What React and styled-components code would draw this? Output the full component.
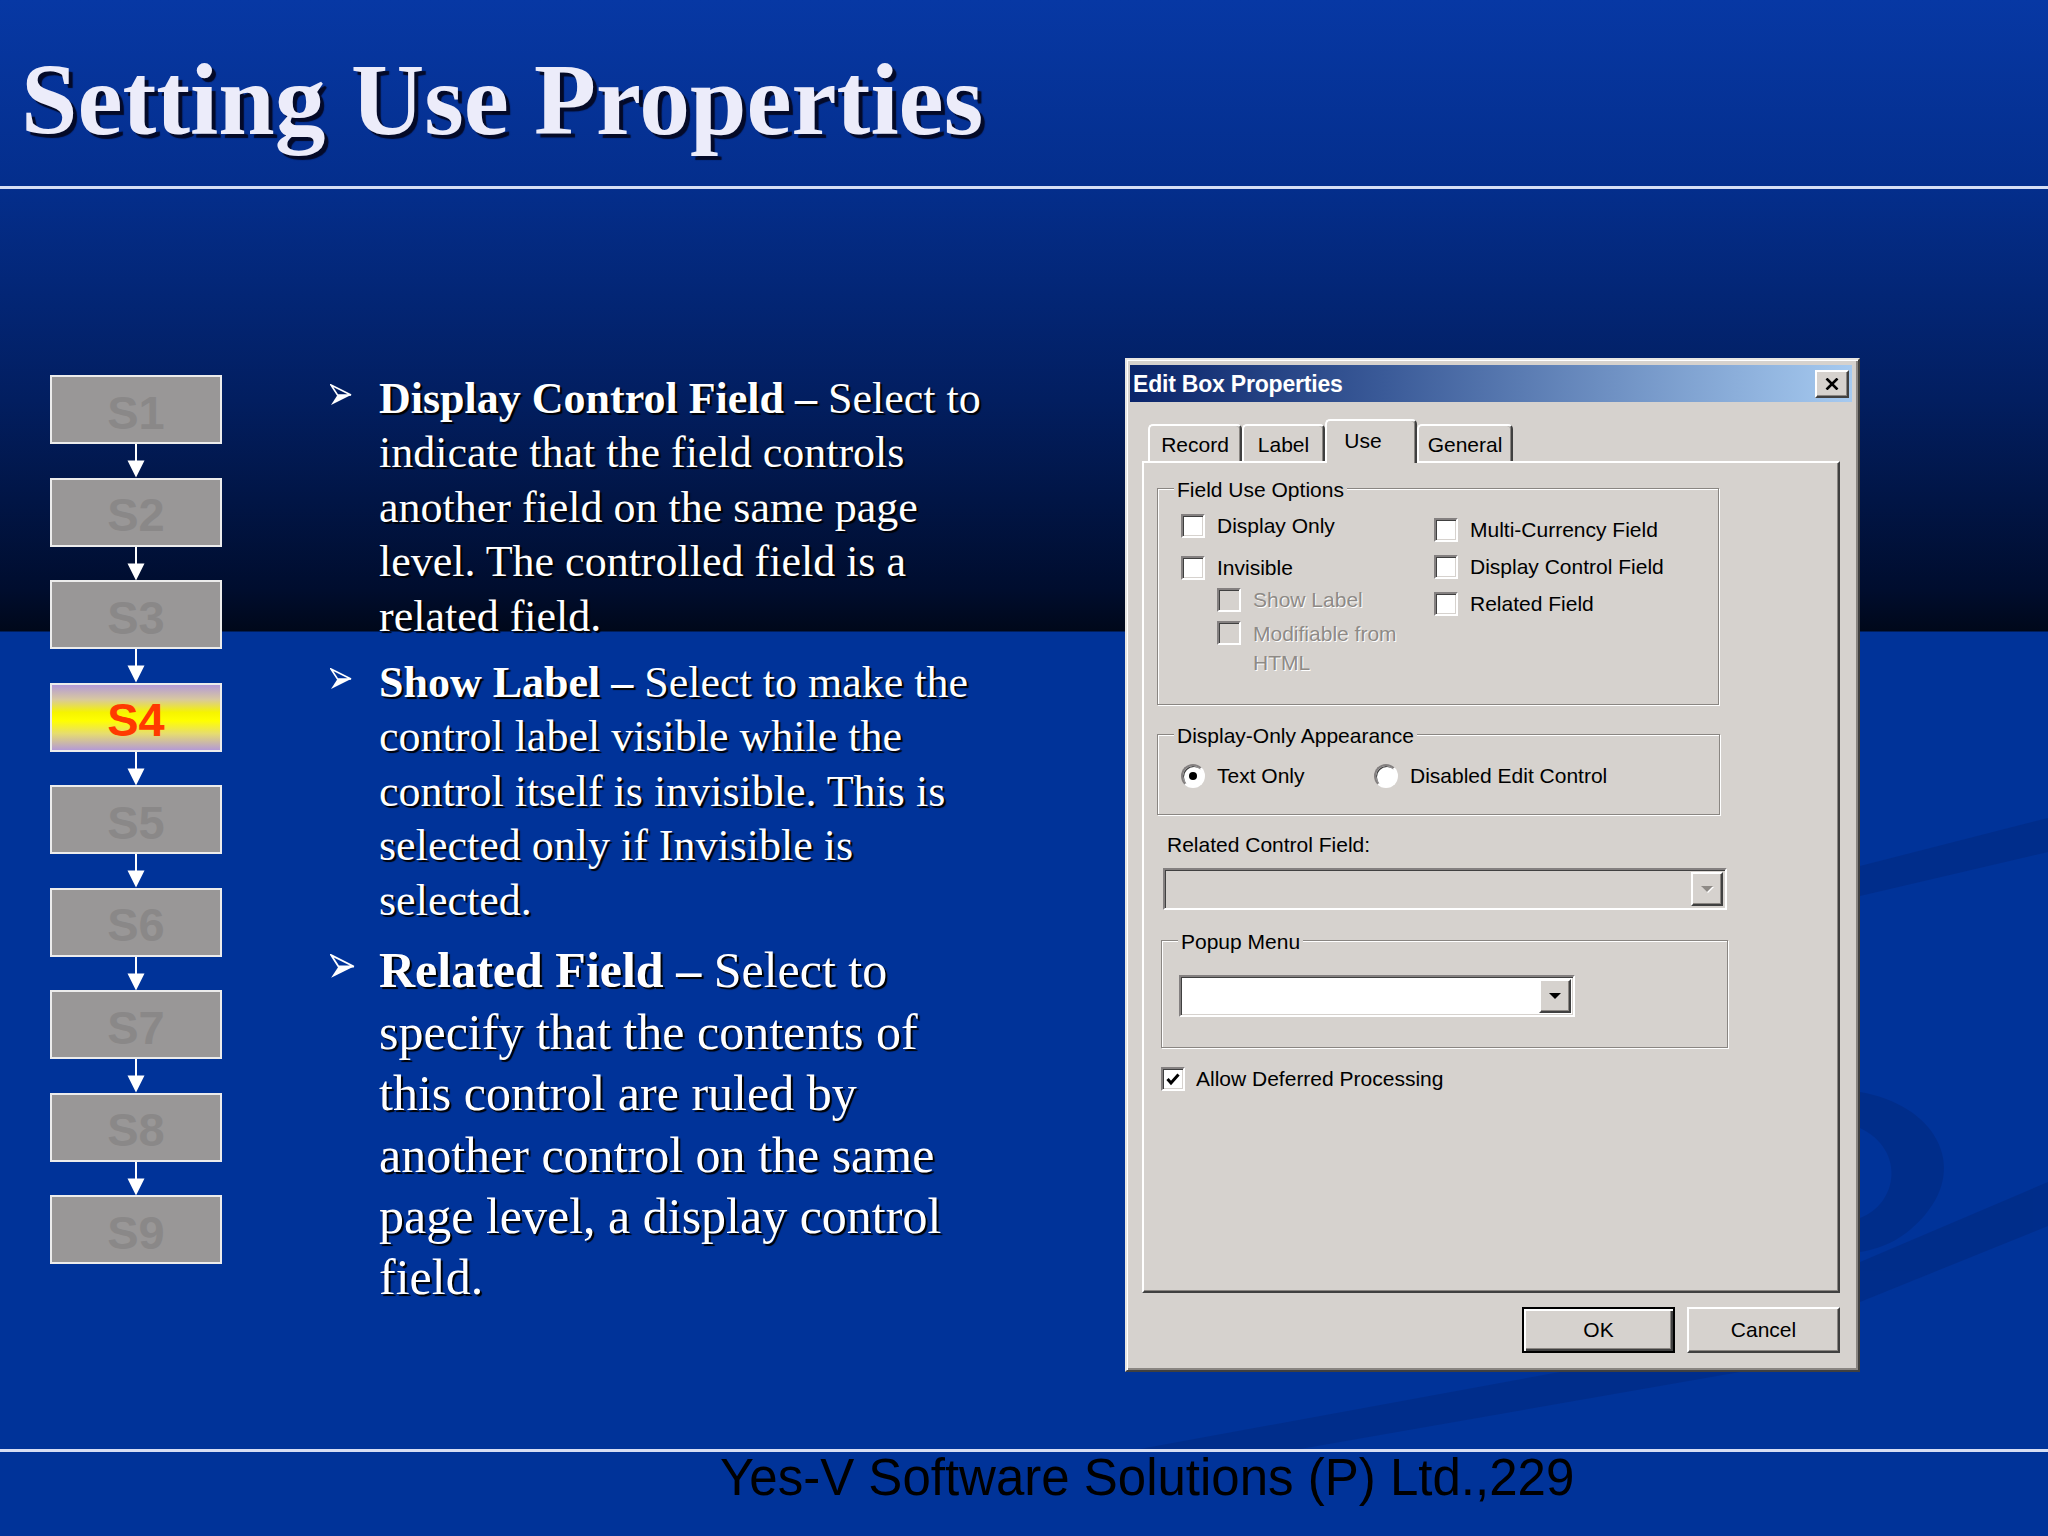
import React from "react";
import styled, { createGlobalStyle } from "styled-components";

const GlobalStyle = createGlobalStyle`
  html, body { margin: 0; padding: 0; background: #003399; }
  #root { width: 2048px; height: 1536px; }
`;

const Slide = styled.div`
  position: relative;
  width: 2048px;
  height: 1536px;
  overflow: hidden;
  display: flex;
  flex-direction: column;
  background: linear-gradient(
    to bottom,
    #0738a4 0px,
    #042e8c 187px,
    #021e60 400px,
    #000d2e 590px,
    #00081a 631px,
    #003399 632px,
    #003399 100%
  );
`;

const Backdrop = styled.svg`
  position: absolute;
  left: 0;
  top: 0;
  width: 2048px;
  height: 1536px;
  pointer-events: none;
`;

const Header = styled.header`
  position: relative;
  box-sizing: border-box;
  height: 186px;
  padding: 50px 0 0 21px;
`;

const Title = styled.h1`
  margin: 0;
  font-family: "Liberation Serif", "Times New Roman", serif;
  font-weight: 700;
  font-size: 101.5px;
  line-height: 101px;
  color: #ececfa;
  text-shadow: 4px 4px 1px #040a28;
  white-space: nowrap;
`;

const Rule = styled.div`
  position: relative;
  height: 3px;
  background: #d6def4;
`;

const Main = styled.main`
  position: relative;
  height: 1260px;
  display: flex;
  align-items: flex-start;
`;

/* ---------- stepper ---------- */
const Stepper = styled.ol`
  list-style: none;
  margin: 186px 0 0 50px;
  padding: 0;
  width: 172px;
  display: flex;
  flex-direction: column;
  align-items: stretch;
`;

const StepBox = styled.li`
  box-sizing: border-box;
  height: 69px;
  border: 2px solid #ececec;
  background: ${(p) =>
    p.$active
      ? "linear-gradient(to bottom, #b49ad6 0%, #d8c8a0 22%, #f6f400 42%, #ffff00 55%, #e6dc70 75%, #b49ad6 100%)"
      : "#999797"};
  display: flex;
  align-items: center;
  justify-content: center;
  padding-top: 5px;
  font-family: "Liberation Sans", Arial, sans-serif;
  font-weight: 700;
  font-size: 47px;
  line-height: 1;
  color: ${(p) => (p.$active ? "#ff3a00" : "#8a8888")};
`;

const Connector = styled.svg`
  display: block;
  align-self: center;
  width: 18px;
  height: 33.5px;
`;

/* ---------- bullets ---------- */
const Bullets = styled.ul`
  list-style: none;
  margin: 183px 0 0 108px;
  padding: 0;
  width: 760px;
`;

const Item = styled.li`
  display: flex;
  align-items: flex-start;
  margin-top: ${(p) => p.$gap}px;
  font-size: ${(p) => p.$size}px;
  line-height: ${(p) => p.$lh}px;
`;

const Marker = styled.svg`
  flex: none;
  width: 0.5em;
  height: 0.5em;
  margin-top: 0.28em;
  margin-right: calc(49px - 0.5em);
`;

const ItemText = styled.p`
  margin: 0;
  font-family: "Liberation Serif", "Times New Roman", serif;
  color: #ffffff;
  text-shadow: 2px 2px 1px #000000;
  white-space: nowrap;
`;

const Term = styled.strong`
  font-weight: 700;
`;

/* ---------- dialog ---------- */
const Dialog = styled.section`
  box-sizing: border-box;
  width: 735px;
  height: 1014px;
  margin: 169px 0 0 35px;
  padding: 5px 6px 0 3px;
  background: #d6d2ce;
  border: 2px solid;
  border-color: #e8e6e2 #404040 #404040 #e8e6e2;
  box-shadow: inset 1px 1px 0 #ffffff, inset -2px -2px 0 #8a8682;
  display: flex;
  flex-direction: column;
  font-family: "Liberation Sans", Arial, sans-serif;
  font-size: 21px;
  line-height: 24px;
  color: #000;
`;

const TitleBar = styled.div`
  height: 37px;
  flex: none;
  display: flex;
  align-items: center;
  justify-content: space-between;
  padding: 0 3px;
  background: linear-gradient(90deg, #0a246a 0%, #3a5a98 35%, #a6caf0 100%);
`;

const TitleText = styled.span`
  font-weight: 700;
  font-size: 23px;
  color: #ffffff;
  letter-spacing: -0.2px;
`;

const CloseButton = styled.button`
  box-sizing: border-box;
  width: 34px;
  height: 28px;
  padding: 0;
  display: flex;
  align-items: center;
  justify-content: center;
  background: #d6d2ce;
  border: 2px solid;
  border-color: #ffffff #404040 #404040 #ffffff;
  box-shadow: inset -1px -1px 0 #8a8682;
`;

const DialogBody = styled.div`
  margin: 17px 12px 0 12px;
  display: flex;
  flex-direction: column;
`;

const TabRow = styled.div`
  height: 42px;
  display: flex;
  align-items: flex-end;
  padding-left: 6px;
`;

const Tab = styled.div`
  position: relative;
  box-sizing: border-box;
  width: ${(p) => p.$w}px;
  height: ${(p) => (p.$selected ? 44 : 37)}px;
  margin: ${(p) => (p.$selected ? "0 0 -2px 0" : "0")};
  z-index: ${(p) => (p.$selected ? 2 : 1)};
  align-self: ${(p) => (p.$selected ? "flex-start" : "flex-end")};
  display: flex;
  align-items: ${(p) => (p.$selected ? "flex-start" : "center")};
  justify-content: center;
  padding: ${(p) => (p.$selected ? "8px 16px 0 0" : "3px 0 0 0")};
  background: #d6d2ce;
  border-top: 2px solid #ffffff;
  border-left: 2px solid #ffffff;
  border-right: 2px solid #404040;
  border-radius: 5px 5px 0 0;
  box-shadow: inset -1px 0 0 #8a8682;
`;

const Panel = styled.div`
  position: relative;
  box-sizing: border-box;
  height: 832px;
  padding: 0 0 0 13px;
  border: 2px solid;
  border-color: #ffffff #404040 #404040 #ffffff;
  box-shadow: inset -1px -1px 0 #8a8682;
  display: flex;
  flex-direction: column;
  align-items: flex-start;
`;

const GroupBox = styled.div`
  position: relative;
  box-sizing: border-box;
  width: ${(p) => p.$w}px;
  height: ${(p) => p.$h}px;
  margin: ${(p) => p.$mt}px 0 0 ${(p) => p.$ml || 0}px;
  padding: ${(p) => p.$pad};
  border: 1px solid #8a8682;
  box-shadow: inset 1px 1px 0 #ffffff, 1px 1px 0 #ffffff;
`;

const Legend = styled.span`
  position: absolute;
  top: -11px;
  left: 16px;
  padding: 0 3px;
  background: #d6d2ce;
  white-space: nowrap;
`;

const OptionsGrid = styled.div`
  display: grid;
  grid-template-columns: 253px auto;
  align-items: start;
`;

const Column = styled.div`
  display: flex;
  flex-direction: column;
  gap: ${(p) => p.$gap || 0}px;
  margin-top: ${(p) => p.$mt || 0}px;
`;

const Row = styled.label`
  display: flex;
  align-items: flex-start;
  margin-top: ${(p) => p.$mt || 0}px;
  margin-left: ${(p) => p.$ml || 0}px;
  width: ${(p) => (p.$w ? `${p.$w}px` : "auto")};
`;

const CheckBox = styled.span`
  box-sizing: border-box;
  flex: none;
  width: 24px;
  height: 24px;
  margin-top: ${(p) => p.$offset || 0}px;
  display: flex;
  align-items: center;
  justify-content: center;
  background: ${(p) => (p.$disabled ? "#d6d2ce" : "#ffffff")};
  border: 2px solid;
  border-color: #848080 #ffffff #ffffff #848080;
  box-shadow: inset 1px 1px 0 #404040, inset -1px -1px 0 #d6d2ce;
`;

const Radio = styled.span`
  position: relative;
  box-sizing: border-box;
  flex: none;
  width: 24px;
  height: 24px;
  border-radius: 50%;
  background: #ffffff;
  border: 2px solid;
  border-color: #848080 #ffffff #ffffff #848080;
  box-shadow: inset 1px 1px 0 #404040;

  &::after {
    content: "";
    display: ${(p) => (p.$checked ? "block" : "none")};
    position: absolute;
    left: 6px;
    top: 6px;
    width: 8px;
    height: 8px;
    border-radius: 50%;
    background: #000;
  }
`;

const OptionLabel = styled.span`
  margin-left: ${(p) => p.$gap || 12}px;
  line-height: ${(p) => p.$lh || 24}px;
  white-space: nowrap;
  color: ${(p) => (p.$disabled ? "#8e8a86" : "#000")};
  text-shadow: ${(p) => (p.$disabled ? "1px 1px 0 #ffffff" : "none")};
`;

const RadioRow = styled.div`
  display: flex;
  align-items: center;
`;

const FieldLabel = styled.div`
  margin: 18px 0 0 10px;
  white-space: nowrap;
`;

const Combo = styled.div`
  box-sizing: border-box;
  width: ${(p) => p.$w}px;
  height: 42px;
  margin: ${(p) => p.$mt || 0}px 0 0 ${(p) => p.$ml || 0}px;
  padding: 2px;
  display: flex;
  justify-content: flex-end;
  background: ${(p) => (p.$disabled ? "#d6d2ce" : "#ffffff")};
  border: 2px solid;
  border-color: #848080 #ffffff #ffffff #848080;
  box-shadow: inset 1px 1px 0 #404040, inset -1px -1px 0 #d6d2ce;
`;

const DropButton = styled.span`
  box-sizing: border-box;
  width: 32px;
  height: 100%;
  display: flex;
  align-items: center;
  justify-content: center;
  background: #d6d2ce;
  border: 2px solid;
  border-color: #ffffff #404040 #404040 #ffffff;
  box-shadow: inset -1px -1px 0 #8a8682;
`;

const Arrow = styled.span`
  width: 0;
  height: 0;
  border-left: 6px solid transparent;
  border-right: 6px solid transparent;
  border-top: 6px solid ${(p) => (p.$disabled ? "#8e8a86" : "#000")};
  filter: ${(p) => (p.$disabled ? "drop-shadow(1px 1px 0 #ffffff)" : "none")};
`;

const ButtonRow = styled.div`
  display: flex;
  justify-content: flex-end;
  gap: 12px;
  margin-top: 14px;
`;

const PushButton = styled.button`
  box-sizing: border-box;
  width: 153px;
  height: 46px;
  padding: 0;
  font-family: "Liberation Sans", Arial, sans-serif;
  font-size: 21px;
  color: #000;
  background: #d6d2ce;
  border: ${(p) => (p.$default ? "2px solid #000" : "2px solid")};
  border-color: ${(p) => (p.$default ? "#000" : "#ffffff #404040 #404040 #ffffff")};
  box-shadow: ${(p) =>
    p.$default
      ? "inset 2px 2px 0 #ffffff, inset -2px -2px 0 #404040, inset -3px -3px 0 #8a8682"
      : "inset -1px -1px 0 #8a8682"};
`;

/* ---------- footer ---------- */
const Footer = styled.footer`
  position: relative;
  flex: 1;
  padding: 1px 0 0 720px;
  font-family: "Liberation Sans", Arial, sans-serif;
  font-size: 51px;
  line-height: 50px;
  color: #000;
  white-space: nowrap;
`;

/* ---------- small drawings ---------- */
const ArrowHead = () => (
  <Marker viewBox="0 0 22 22" aria-hidden="true">
    <path d="M1 1 L21 11 L7.5 11 Z" fill="none" stroke="#ffffff" strokeWidth="1.6" strokeLinejoin="miter" />
    <path d="M7.5 11 L21 11 L1 21 Z" fill="#ffffff" />
  </Marker>
);

const Check = () => (
  <svg width="16" height="16" viewBox="0 0 16 16" aria-hidden="true">
    <path d="M2.5 8 L6 12 L13.5 3.5" fill="none" stroke="#000" strokeWidth="3" />
  </svg>
);

const StepArrow = () => (
  <Connector viewBox="0 0 18 33.5" aria-hidden="true">
    <rect x="8" y="0" width="2" height="18" fill="#ffffff" />
    <path d="M0.5 16.5 L17.5 16.5 L9 33.5 Z" fill="#ffffff" />
  </Connector>
);

const steps = ["S1", "S2", "S3", "S4", "S5", "S6", "S7", "S8", "S9"];

const bullets = [
  {
    term: "Display Control Field",
    size: 44,
    lh: 54.4,
    gap: 0,
    lines: [
      "Select to",
      "indicate that the field controls",
      "another field on the same page",
      "level. The controlled field is a",
      "related field.",
    ],
  },
  {
    term: "Show Label",
    size: 44,
    lh: 54.4,
    gap: 12,
    lines: [
      "Select to make the",
      "control label visible while the",
      "control itself is invisible. This is",
      "selected only if Invisible is",
      "selected.",
    ],
  },
  {
    term: "Related Field",
    size: 50,
    lh: 61.4,
    gap: 12.4,
    lines: [
      "Select to",
      "specify that the contents of",
      "this control are ruled by",
      "another control on the same",
      "page level, a display control",
      "field.",
    ],
  },
];

const tabs = [
  { label: "Record", w: 94 },
  { label: "Label", w: 83 },
  { label: "Use", w: 92, selected: true },
  { label: "General", w: 96 },
];

export default function App() {
  return (
    <>
      <GlobalStyle />
      <Slide>
        <Backdrop viewBox="0 0 2048 1536" aria-hidden="true">
          <g fill="#002474" opacity="0.38">
            <path d="M2048 818 L2048 852 L1860 896 L1860 866 Z" />
            <path d="M1860 1092 C1935 1105 1968 1165 1925 1215 C1905 1238 1885 1248 1860 1252 L1860 1218 C1898 1204 1906 1150 1860 1128 Z" />
            <path d="M2048 1182 L2048 1226 L1860 1302 L1860 1262 Z" />
            <path d="M1140 1449 L1300 1449 L1740 1372 L1560 1372 Z" />
          </g>
        </Backdrop>

        <Header>
          <Title>Setting Use Properties</Title>
        </Header>
        <Rule />

        <Main>
          <Stepper>
            {steps.map((s, i) => (
              <React.Fragment key={s}>
                {i > 0 && <StepArrow />}
                <StepBox $active={s === "S4"}>{s}</StepBox>
              </React.Fragment>
            ))}
          </Stepper>

          <Bullets>
            {bullets.map((b) => (
              <Item key={b.term} $gap={b.gap} $size={b.size} $lh={b.lh}>
                <ArrowHead />
                <ItemText>
                  <Term>{b.term} – </Term>
                  {b.lines.map((l, i) => (
                    <React.Fragment key={i}>
                      {i > 0 && <br />}
                      {l}
                    </React.Fragment>
                  ))}
                </ItemText>
              </Item>
            ))}
          </Bullets>

          <Dialog>
            <TitleBar>
              <TitleText>Edit Box Properties</TitleText>
              <CloseButton aria-label="Close">
                <svg width="14" height="12" viewBox="0 0 14 12" aria-hidden="true">
                  <path d="M1.5 0.5 L12.5 11.5 M12.5 0.5 L1.5 11.5" stroke="#000" strokeWidth="2.6" />
                </svg>
              </CloseButton>
            </TitleBar>

            <DialogBody>
              <TabRow>
                {tabs.map((t) => (
                  <Tab key={t.label} $w={t.w} $selected={t.selected}>
                    {t.label}
                  </Tab>
                ))}
              </TabRow>

              <Panel>
                <GroupBox $w={562} $h={217} $mt={25} $pad="25px 0 0 23px">
                  <Legend>Field Use Options</Legend>
                  <OptionsGrid>
                    <Column>
                      <Row>
                        <CheckBox />
                        <OptionLabel>Display Only</OptionLabel>
                      </Row>
                      <Row $mt={17.5}>
                        <CheckBox />
                        <OptionLabel>Invisible</OptionLabel>
                      </Row>
                      <Row $mt={8.5} $ml={36}>
                        <CheckBox $disabled />
                        <OptionLabel $disabled>Show Label</OptionLabel>
                      </Row>
                      <Row $mt={7} $ml={36}>
                        <CheckBox $disabled $offset={2} />
                        <OptionLabel $disabled $lh={29}>
                          Modifiable from
                          <br />
                          HTML
                        </OptionLabel>
                      </Row>
                    </Column>
                    <Column $gap={13} $mt={4}>
                      <Row>
                        <CheckBox />
                        <OptionLabel>Multi-Currency Field</OptionLabel>
                      </Row>
                      <Row>
                        <CheckBox />
                        <OptionLabel>Display Control Field</OptionLabel>
                      </Row>
                      <Row>
                        <CheckBox />
                        <OptionLabel>Related Field</OptionLabel>
                      </Row>
                    </Column>
                  </OptionsGrid>
                </GroupBox>

                <GroupBox $w={563} $h={81} $mt={29} $pad="29px 0 0 23px">
                  <Legend>Display-Only Appearance</Legend>
                  <RadioRow>
                    <Row $w={193}>
                      <Radio $checked />
                      <OptionLabel>Text Only</OptionLabel>
                    </Row>
                    <Row>
                      <Radio />
                      <OptionLabel>Disabled Edit Control</OptionLabel>
                    </Row>
                  </RadioRow>
                </GroupBox>

                <FieldLabel>Related Control Field:</FieldLabel>
                <Combo $w={564} $mt={11} $ml={6} $disabled>
                  <DropButton>
                    <Arrow $disabled />
                  </DropButton>
                </Combo>

                <GroupBox $w={567} $h={108} $mt={30} $ml={4} $pad="34px 0 0 17px">
                  <Legend>Popup Menu</Legend>
                  <Combo $w={396}>
                    <DropButton>
                      <Arrow />
                    </DropButton>
                  </Combo>
                </GroupBox>

                <Row $mt={19} $ml={4}>
                  <CheckBox>
                    <Check />
                  </CheckBox>
                  <OptionLabel $gap={11}>Allow Deferred Processing</OptionLabel>
                </Row>
              </Panel>

              <ButtonRow>
                <PushButton $default>OK</PushButton>
                <PushButton>Cancel</PushButton>
              </ButtonRow>
            </DialogBody>
          </Dialog>
        </Main>

        <Rule />
        <Footer>Yes-V Software Solutions (P) Ltd.,229</Footer>
      </Slide>
    </>
  );
}
